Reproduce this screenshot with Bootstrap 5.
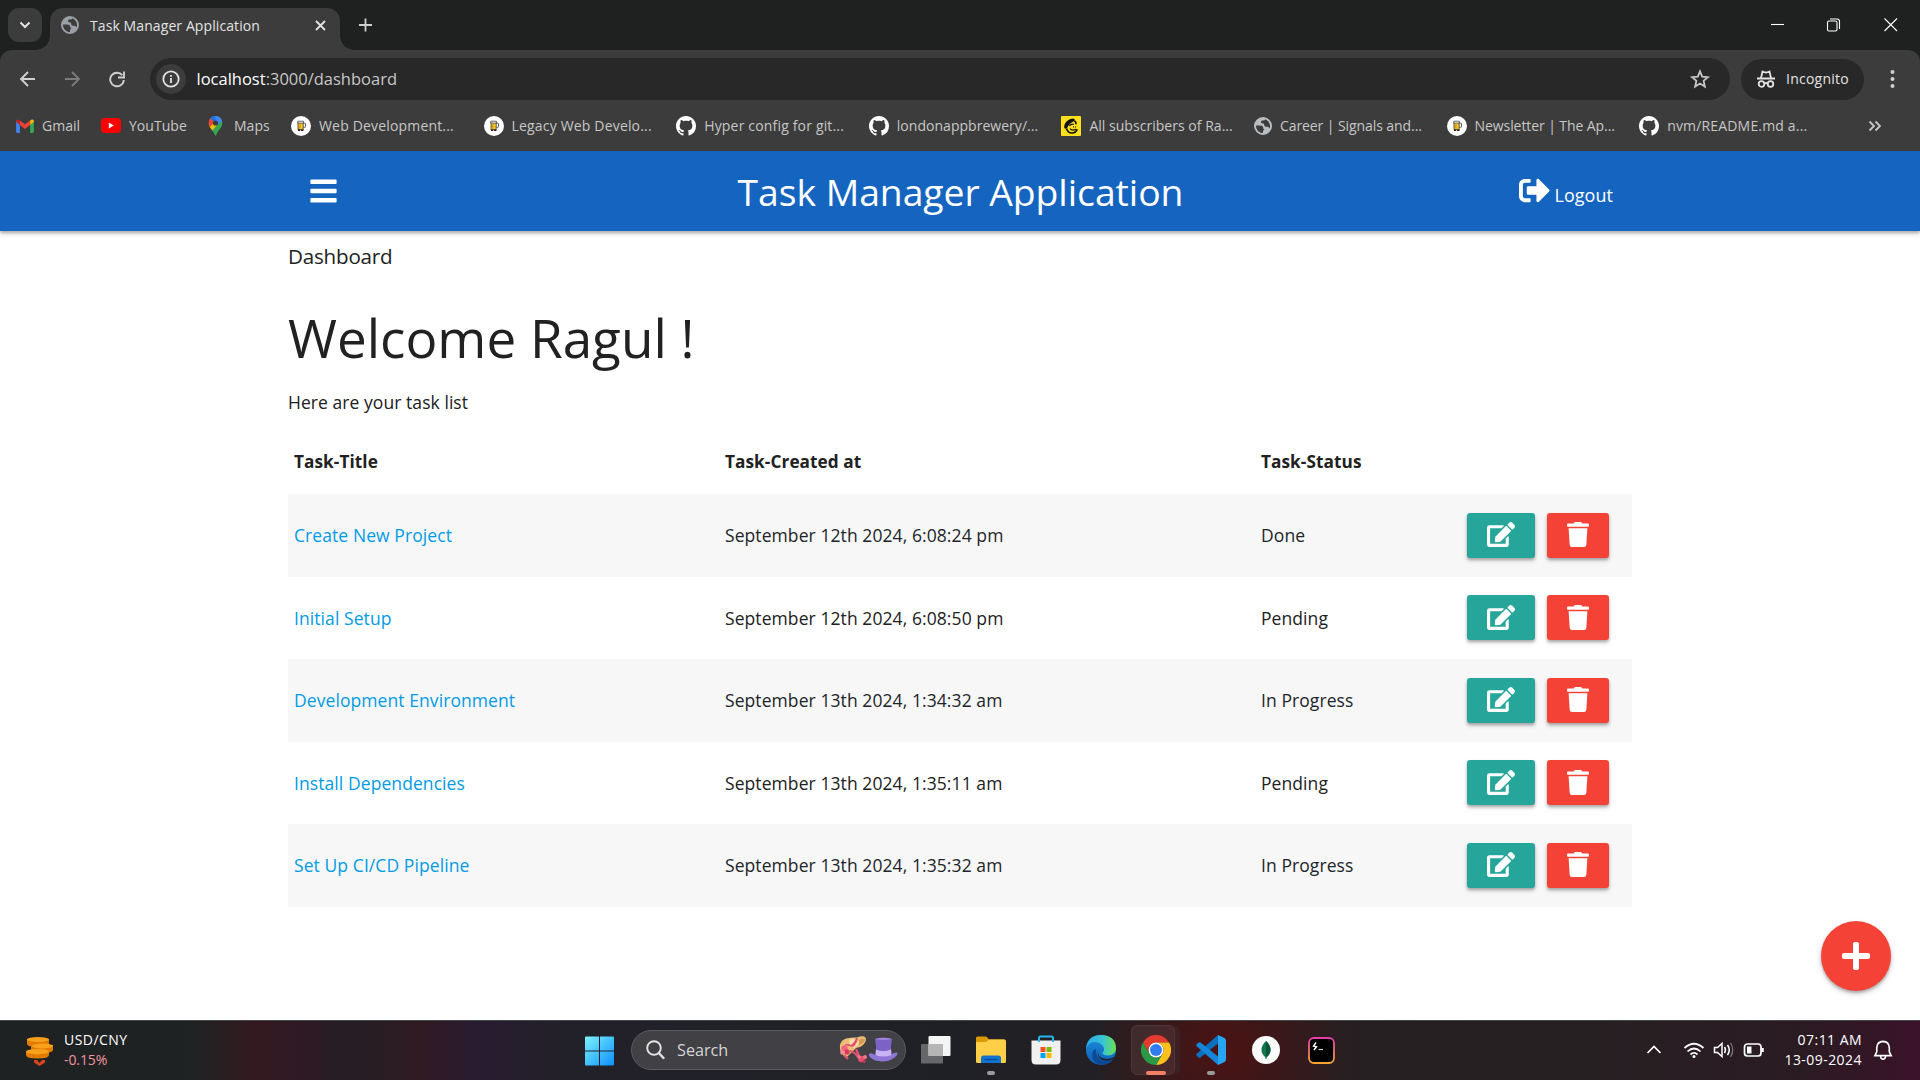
<!DOCTYPE html>
<html lang="en">
<head>
<meta charset="utf-8">
<meta name="viewport" content="width=device-width, initial-scale=1">
<title>Task Manager Application</title>
<link href="https://cdn.jsdelivr.net/npm/bootstrap@5.3.0/dist/css/bootstrap.min.css" rel="stylesheet">
<style>
body{font-family:"Open Sans","Noto Sans",sans-serif;font-size:17.5px;color:#212121;width:1920px;height:1080px;overflow:hidden;background:#fff}
svg{display:block;flex:none}
.tabstrip{height:50px;background:#1f2120;padding-left:8px}
.tab-search{width:34px;height:34px;border-radius:11px;background:#3c3c3c;margin-right:8px}
.page-tab{width:290px;height:42px;margin-top:8px;background:#3c3c3c;border-radius:13px 13px 0 0;padding:0 14px 8px 11px;position:relative;font-size:14px;letter-spacing:.09px;color:#e3e3e3}
.page-tab::before,.page-tab::after{content:"";position:absolute;bottom:0;width:14px;height:14px}
.page-tab::before{left:-14px;background:radial-gradient(circle at 0 0,transparent 13.5px,#3c3c3c 14px)}
.page-tab::after{right:-14px;background:radial-gradient(circle at 100% 0,transparent 13.5px,#3c3c3c 14px)}
.page-tab span{margin-left:11px}
.win-controls{padding-right:22px}
.toolbar-wrap{background:#1f2120}
.toolbar{height:56px;background:#3c3c3c;border-radius:12px 12px 0 0;padding:2px 19px 0 19px}
.omnibox{width:1580px;height:42px;border-radius:21px;background:#282828;margin-left:24px;padding:0 20px 0 6px;font-size:16.5px}
.url-path{color:#c7c7c7}
.site-info{width:30px;height:30px;border-radius:50%;background:#3c3c3c;margin-right:10.5px}
.incog{width:123px;height:41px;border-radius:21px;background:#282828;margin-left:11px;padding-left:15px;color:#e3e3e3;font-size:14px;letter-spacing:.25px}
.incog span{margin-left:10px;padding-bottom:1px}
.bookmarks{height:45px;background:#3c3c3c;padding:0 38px 6px 16px;font-size:14px;letter-spacing:.03px;color:#c7c7c7}
.bm{width:192.6px;white-space:nowrap}
.bm svg{margin-right:8px}
.bm.wider{letter-spacing:.17px}
.bm.narrower{letter-spacing:-.08px}
.bm-gmail{width:85px}.bm-yt{width:107px}.bm-maps{width:83px}
.bm-maps svg{margin-right:9px}
.appbar{height:80px;background:#1565c0;color:#fff;box-shadow:0 2px 3px rgba(0,0,0,.28),0 4px 6px rgba(0,0,0,.08);position:relative}
.inner{width:1344px;margin:0 auto}
.appbar .inner{display:grid;grid-template-columns:1fr auto 1fr;height:80px;align-items:center;padding:0 19px 0 20px}
.menu-btn{padding-left:2px}
.brand-title{font-size:37.3px;letter-spacing:-.05px;line-height:50px;padding-top:2px}
.logout-link{font-size:17.9px;letter-spacing:.1px}
.crumb{font-size:20.6px;letter-spacing:-.2px;line-height:51px;padding-bottom:1px}
.hello{font-size:53px;line-height:109px}
.sub{line-height:20px;margin-bottom:17px;letter-spacing:.06px}
.tasks{table-layout:fixed;width:1344px;margin:0;--bs-table-striped-bg:#f7f7f8;--bs-table-bg:#fff;color:#212121;letter-spacing:.08px}
.tasks>:not(caption)>*>*{border:0;padding:0 6px;color:#212121;vertical-align:middle}
.tasks thead tr{height:65px;font-size:17.2px}.tasks tbody tr{height:82.5px}
.tasks a{color:#039be5;text-decoration:none}
.col-title{width:431px}.col-created{width:536px}.col-status{width:206px}
.acts{gap:12px}
.act{height:45px;border:0;border-radius:3px;padding:0 0 1px;box-shadow:0 2px 3px rgba(0,0,0,.26),0 3px 5px rgba(0,0,0,.12);display:flex;align-items:center;justify-content:center}
.act-edit{width:68px;background:#26a69a}.act-del{width:62px;background:#f44336}
.fab{position:absolute;left:1821px;top:921px;width:70px;height:70px;background:#f44336;box-shadow:0 2px 3px rgba(0,0,0,.26),0 3px 6px rgba(0,0,0,.14)}
.taskbar{height:60px;border-top:1px solid #454848;font-size:14px;letter-spacing:.45px;line-height:20px;color:#fff;background:
 radial-gradient(ellipse 130px 120px at 1222px 30px,rgba(84,16,16,.85),transparent),
 linear-gradient(90deg,#1f2223 0,#1f2223 190px,#33191f 260px,#2d1a25 310px,#231f24 350px,#301a22 420px,#281c30 475px,#222129 560px,#1f2026 950px,#222024 1080px,#251f22 1340px,#272023 1600px,#2a1b22 1800px,#351527 1890px,#3c132b 1920px)}
.ticker{width:585px;padding-left:25px;gap:9px}
.two-line{padding-bottom:2px}
.loss{color:#f1939d;letter-spacing:-.1px}
.searchbox{width:275px;height:40px;border:1px solid #5b5a5e;border-radius:20px;background:#414044;color:#d5d5d5;font-size:16.2px;letter-spacing:0;padding:0 7px 0 14px;margin:0 15px 1px 16px}
.dock{gap:25px}
.dock>div{width:30px;height:59px;display:flex;align-items:center;justify-content:center;position:relative}
.dock>div>svg{margin-bottom:1px}
.run::after{content:"";position:absolute;bottom:5px;left:11px;width:8px;height:4px;border-radius:2px;background:#9b9b9d}
.run.current::after{left:5px;width:20px;background:#f28066}
.current::before{content:"";position:absolute;left:-10px;top:4px;width:44px;height:50px;border-radius:6px;border:1px solid #513438;background:rgba(255,255,255,.07);box-shadow:6px 0 0 -1px #3d2023}
.dock svg{position:relative}
.tray{padding-right:25px}
.tray>svg{margin-bottom:2px}
</style>
</head>
<body class="d-flex flex-column">
<svg width="0" height="0" class="position-absolute">
<defs>
<symbol id="globe" viewBox="2 2 20 20"><path fill-rule="evenodd" d="M12 2a10 10 0 1 0 0 20 10 10 0 0 0 0-20zM4.200 11.500h4.300c2.800 0 3.800 1 3.800 2.700 0 1.300.8 1.500 1.500 1.500-1 .7-1.800 1.300-1.800 2.300v1.900c-4.300 0-7.800-3.400-7.800-8.400zM14.200 4.500c3.200.9 5.600 3.900 5.600 7.500 0 1-.2 1.900-.5 2.700-.7-1.400-1.600-1.900-3-1.900-2 0-3-.8-3-2.300 0-1-.5-1.400-1.500-1.400-1.200 0-2-.6-2-1.600 0-1.200 1-1.500 2.200-1.500 1.300 0 2.200-.4 2.200-1.500z"/></symbol>
<symbol id="gh" viewBox="0 0 16 16"><path fill="#fff" d="M8 0C3.580 0 0 3.580 0 8c0 3.540 2.290 6.530 5.470 7.590.4.070.55-.17.55-.38 0-.19-.01-.82-.01-1.490-2.010.37-2.530-.49-2.690-.94-.09-.23-.48-.94-.82-1.130-.28-.15-.68-.52-.01-.53.63-.01 1.080.58 1.230.82.72 1.210 1.870.87 2.330.66.07-.52.28-.87.51-1.070-1.780-.2-3.640-.89-3.640-3.950 0-.87.31-1.590.82-2.150-.08-.2-.36-1.020.08-2.120 0 0 .67-.21 2.200.82.64-.18 1.320-.27 2-.27s1.360.09 2 .27c1.530-1.040 2.200-.82 2.200-.82.44 1.100.16 1.920.08 2.120.51.56.82 1.270.82 2.150 0 3.070-1.870 3.750-3.650 3.950.29.25.54.73.54 1.480 0 1.070-.01 1.930-.01 2.200 0 .21.15.46.55.38A8.010 8.010 0 0 0 16 8c0-4.420-3.580-8-8-8z"/></symbol>
<symbol id="beer" viewBox="0 0 20 20"><circle cx="10" cy="10" r="10" fill="#fff"/><path d="M12.500 7.200h1.300q.7 0 .7.700v2.700q0 .7-.7.700h-1.300" fill="none" stroke="#444" stroke-width=".9"/><path d="M7 6h5.200v7.600H7z" fill="#f6c52c" stroke="#3a3320" stroke-width=".8"/><path d="M6.800 5.200h5.600v1.900H6.800z" fill="#fff" stroke="#333" stroke-width=".7"/><path d="M8.900 8.300v4.200" stroke="#b9820c" stroke-width=".8"/><path d="M6.900 13.600h2.300v1.500H6.900zM10.100 13.600h2.300v1.500h-2.300z" fill="#222"/></symbol>
<symbol id="edit" viewBox="0 0 576 512"><path fill="#fff" d="M402.600 83.200l90.200 90.200c3.800 3.800 3.800 10 0 13.800L274.400 405.600l-92.800 10.300c-12.400 1.400-22.900-9.100-21.500-21.500l10.300-92.800L388.800 83.200c3.800-3.800 10-3.800 13.800 0zm162-22.900l-48.800-48.800c-15.200-15.200-39.900-15.200-55.200 0l-35.400 35.400c-3.800 3.800-3.800 10 0 13.800l90.200 90.200c3.800 3.800 10 3.800 13.800 0l35.400-35.400c15.200-15.300 15.200-40 0-55.200zM384 346.200V448H64V128h229.800c3.200 0 6.200-1.300 8.500-3.500l40-40c7.600-7.600 2.200-20.500-8.500-20.500H48C21.500 64 0 85.500 0 112v352c0 26.500 21.500 48 48 48h352c26.500 0 48-21.500 48-48V306.200c0-10.700-12.900-16-20.500-8.500l-40 40c-2.200 2.300-3.500 5.300-3.500 8.500z"/></symbol>
<symbol id="trash" viewBox="0 0 448 512"><path fill="#fff" d="M432 32H312l-9.400-18.700A24 24 0 0 0 281.100 0H166.800a23.720 23.720 0 0 0-21.400 13.300L136 32H16A16 16 0 0 0 0 48v32a16 16 0 0 0 16 16h416a16 16 0 0 0 16-16V48a16 16 0 0 0-16-16zM53.200 467a48 48 0 0 0 47.900 45h245.800a48 48 0 0 0 47.900-45L416 128H32z"/></symbol>
</defs>
</svg>

<header>
  <div class="tabstrip d-flex align-items-center">
    <div class="tab-search d-flex align-items-center justify-content-center"><svg width="12" height="8" viewBox="0 0 12 8" fill="none" stroke="#e3e3e3" stroke-width="2"><path d="M1.500 1.500L6 6l4.500-4.500"/></svg></div>
    <div class="page-tab d-flex align-items-center">
      <svg width="18" height="18" fill="#9aa0a6"><use href="#globe"/></svg>
      <span>Task Manager Application</span>
      <svg class="ms-auto" width="11" height="11" viewBox="0 0 11 11" stroke="#e3e3e3" stroke-width="1.800"><path d="M1 1l9 9M10 1l-9 9"/></svg>
    </div>
    <svg class="ms-3" width="17" height="14" viewBox="0 0 17 14" stroke="#d0d0d0" stroke-width="1.800"><path d="M9.500 .500v13M3 7h13"/></svg>
    <div class="win-controls ms-auto">
      <svg width="127" height="14" viewBox="0 0 127 14" fill="none" stroke="#fff" stroke-width="1.100"><path d="M0 6.500h13"/><rect x="56.500" y="3" width="9.500" height="10" rx="1.500"/><path d="M59 1h7q2.500 0 2.500 2.500V11"/><path d="M113.500 .500l12.500 12.500M126 .500L113.500 13"/></svg>
    </div>
  </div>
  <div class="toolbar-wrap"><div class="toolbar d-flex align-items-center">
    <svg width="107" height="18" viewBox="0 0 107 18" fill="none" stroke-width="1.900"><path stroke="#d0d0d0" d="M16 9H2.500M9 2L2 9l7 7"/><path stroke="#7b7b7b" d="M46 9h13.500M53 2l7 7-7 7"/><path stroke="#d0d0d0" d="M103.300 5.200A6.800 6.800 0 1 0 104.800 10M105 1.500v6h-6"/></svg>
    <div class="omnibox d-flex align-items-center">
      <span class="site-info d-flex align-items-center justify-content-center"><svg width="18" height="18" viewBox="0 0 18 18" fill="none" stroke="#e3e3e3" stroke-width="1.800"><circle cx="9" cy="9" r="7.700"/><path d="M9 8v5M9 5v1.700"/></svg></span>
      <span><span class="text-white">localhost</span><span class="url-path">:3000/dashboard</span></span>
      <svg class="ms-auto" width="20" height="20" viewBox="0 0 20 20" fill="none" stroke="#c7c7c7" stroke-width="1.800"><path d="M10 2.300l2.200 5.300 5.700.5-4.300 3.800 1.300 5.600-4.900-3-4.900 3 1.300-5.600L2.100 8.100l5.700-.5z"/></svg>
    </div>
    <div class="incog d-flex align-items-center"><svg width="20" height="20" viewBox="0 0 20 20" fill="none" stroke="#e3e3e3" stroke-width="1.800"><path d="M1 9.500h18M5 9l1.500-6.500q2 1 3.500 1t3.500-1L15 9"/><circle cx="5.500" cy="15" r="2.800"/><circle cx="14.500" cy="15" r="2.800"/><path d="M8.300 14.500q1.700-1 3.400 0"/></svg><span>Incognito</span></div>
    <svg class="ms-auto" width="18" height="20" viewBox="0 0 18 20" fill="#d0d0d0"><circle cx="9.500" cy="3" r="2"/><circle cx="9.500" cy="10" r="2"/><circle cx="9.500" cy="17" r="2"/></svg>
  </div></div>
  <div class="bookmarks d-flex align-items-center">
    <div class="bm bm-gmail d-flex align-items-center"><svg width="18" height="14" viewBox="0 0 19 15"><path fill="#4285f4" d="M0 2v11.500Q0 15 1.500 15H4V6z"/><path fill="#34a853" d="M19 2v11.500q0 1.500-1.500 1.500H15V6z"/><path fill="#fbbc04" d="M15 1.500Q17 0 18.300 .8 19 1.300 19 3l-4 3.500z"/><path fill="#c5221f" d="M4 1.500Q2 0 .7.800 0 1.300 0 3l4 3.500z"/><path fill="#ea4335" d="M4 1.500l5.500 4.200L15 1.500v5L9.500 10.700 4 6.500z"/></svg><span>Gmail</span></div>
    <div class="bm bm-yt d-flex align-items-center"><svg width="20" height="15" viewBox="0 0 20 15"><rect width="20" height="15" rx="4" fill="#f00"/><path d="M7.800 4.500l5 3-5 3z" fill="#fff"/></svg><span>YouTube</span></div>
    <div class="bm bm-maps d-flex align-items-center"><svg width="17" height="20" viewBox="-.5 0 17 20"><clipPath id="pin"><path d="M7 0a7 7 0 0 1 7 7c0 3-2 4.800-3.500 7C9 16.200 8.200 18 7 20 5.800 18 5 16.200 3.500 14 2 11.800 0 10 0 7a7 7 0 0 1 7-7z"/></clipPath><g clip-path="url(#pin)"><path fill="#34a853" d="M0 0h16v20H0z"/><path fill="#fbbc04" d="M-1 8L4 4l8 1-8.500 10z"/><path fill="#4285f4" d="M3 0h9l3 4-6 5z"/><path fill="#1a73e8" d="M0 0h6l2 5-4 1z"/><path fill="#ea4335" d="M-1 2l2.500 0L6 6l-4.500 5L-1 8z"/></g><circle cx="7" cy="7" r="2.600" fill="#3a3c3c"/></svg><span>Maps</span></div>
    <div class="bm wider d-flex align-items-center"><svg width="20" height="20"><use href="#beer"/></svg><span>Web Development...</span></div>
    <div class="bm wider d-flex align-items-center"><svg width="20" height="20"><use href="#beer"/></svg><span>Legacy Web Develo...</span></div>
    <div class="bm wider d-flex align-items-center"><svg width="20" height="20"><use href="#gh"/></svg><span>Hyper config for git...</span></div>
    <div class="bm d-flex align-items-center"><svg width="20" height="20"><use href="#gh"/></svg><span>londonappbrewery/...</span></div>
    <div class="bm d-flex align-items-center"><svg width="20" height="20" viewBox="0 0 20 20"><rect width="20" height="20" rx="1" fill="#ffe01b"/><path d="M3.200 11.500Q3 7 7 4.300T13.500 3q.8.800-.5 2Q9 7 7.300 9.700 6.500 12 5 12.800 3.500 13 3.200 11.500z" fill="#111"/><path d="M5.500 12.500Q7 17.200 11 17q4-.2 5.200-3.800M13 5q2.500.5 1.700 3.200" fill="none" stroke="#111" stroke-width="1.700"/><path d="M9 12.500q1.500 2.800 6 .800M8.300 10q2-2.500 4.500-1.500M12 10.800h.900M14.200 10.800h.9" fill="none" stroke="#111" stroke-width="1.200"/></svg><span>All subscribers of Ra...</span></div>
    <div class="bm narrower d-flex align-items-center"><svg width="18" height="18" fill="#b9bec3"><use href="#globe"/></svg><span>Career | Signals and...</span></div>
    <div class="bm narrower d-flex align-items-center"><svg width="20" height="20"><use href="#beer"/></svg><span>Newsletter | The Ap...</span></div>
    <div class="bm wider d-flex align-items-center"><svg width="20" height="20"><use href="#gh"/></svg><span>nvm/README.md a...</span></div>
    <svg class="ms-auto" width="14" height="12" viewBox="0 0 14 12" fill="none" stroke="#c7c7c7" stroke-width="1.800"><path d="M1.500 1.500L6 6l-4.500 4.500M7.500 1.500L12 6l-4.500 4.500"/></svg>
  </div>
</header>

<nav class="appbar"><div class="inner">
  <a class="menu-btn" href="#"><svg width="27" height="30" viewBox="0 0 448 512" fill="#fff"><rect y="60" width="448" height="76" rx="16"/><rect y="218" width="448" height="76" rx="16"/><rect y="376" width="448" height="76" rx="16"/></svg></a>
  <span class="brand-title">Task Manager Application</span>
  <a class="logout-link d-flex align-items-center justify-content-end text-white text-decoration-none" href="#"><svg class="me-1" width="31" height="31" viewBox="0 0 512 512" fill="#fff"><path d="M497 273L329 441c-15 15-41 4.500-41-17v-96H152c-13.300 0-24-10.700-24-24v-96c0-13.300 10.700-24 24-24h136V88c0-21.400 25.900-32 41-17l168 168c9.300 9.400 9.300 24.600 0 34zM192 436v-40c0-6.600-5.400-12-12-12H96c-17.700 0-32-14.300-32-32V160c0-17.700 14.300-32 32-32h84c6.600 0 12-5.400 12-12V76c0-6.600-5.400-12-12-12H96c-53 0-96 43-96 96v192c0 53 43 96 96 96h84c6.600 0 12-5.400 12-12z"/></svg><span class="pt-2">Logout</span></a>
</div></nav>

<main class="flex-grow-1"><div class="inner">
  <div class="crumb">Dashboard</div>
  <div class="hello">Welcome Ragul !</div>
  <div class="sub">Here are your task list</div>
  <table class="table table-striped tasks">
    <colgroup><col class="col-title"><col class="col-created"><col class="col-status"><col></colgroup>
    <thead><tr><th>Task-Title</th><th>Task-Created at</th><th>Task-Status</th><th></th></tr></thead>
    <tbody>
    <tr><td><a href="#">Create New Project</a></td><td>September 12th 2024, 6:08:24 pm</td><td>Done</td><td><div class="d-flex acts"><button class="btn act act-edit"><svg width="28" height="25"><use href="#edit"/></svg></button><button class="btn act act-del"><svg width="22" height="25"><use href="#trash"/></svg></button></div></td></tr>
    <tr><td><a href="#">Initial Setup</a></td><td>September 12th 2024, 6:08:50 pm</td><td>Pending</td><td><div class="d-flex acts"><button class="btn act act-edit"><svg width="28" height="25"><use href="#edit"/></svg></button><button class="btn act act-del"><svg width="22" height="25"><use href="#trash"/></svg></button></div></td></tr>
    <tr><td><a href="#">Development Environment</a></td><td>September 13th 2024, 1:34:32 am</td><td>In Progress</td><td><div class="d-flex acts"><button class="btn act act-edit"><svg width="28" height="25"><use href="#edit"/></svg></button><button class="btn act act-del"><svg width="22" height="25"><use href="#trash"/></svg></button></div></td></tr>
    <tr><td><a href="#">Install Dependencies</a></td><td>September 13th 2024, 1:35:11 am</td><td>Pending</td><td><div class="d-flex acts"><button class="btn act act-edit"><svg width="28" height="25"><use href="#edit"/></svg></button><button class="btn act act-del"><svg width="22" height="25"><use href="#trash"/></svg></button></div></td></tr>
    <tr><td><a href="#">Set Up CI/CD Pipeline</a></td><td>September 13th 2024, 1:35:32 am</td><td>In Progress</td><td><div class="d-flex acts"><button class="btn act act-edit"><svg width="28" height="25"><use href="#edit"/></svg></button><button class="btn act act-del"><svg width="22" height="25"><use href="#trash"/></svg></button></div></td></tr>
    </tbody>
  </table>
</div></main>
<a class="fab rounded-circle d-flex align-items-center justify-content-center" href="#"><svg width="28" height="32" viewBox="0 0 448 512" fill="#fff"><path d="M416 208H272V64c0-17.670-14.330-32-32-32h-32c-17.670 0-32 14.330-32 32v144H32c-17.670 0-32 14.330-32 32v32c0 17.670 14.330 32 32 32h144v144c0 17.670 14.330 32 32 32h32c17.670 0 32-14.330 32-32V304h144c17.670 0 32-14.330 32-32v-32c0-17.670-14.330-32-32-32z"/></svg></a>

<footer class="taskbar d-flex align-items-center">
  <div class="ticker d-flex align-items-center">
    <svg width="30" height="30" viewBox="0 0 30 30"><g fill="#e07b00"><path d="M2 3v5q0 3 11 3t11-3V3z"/><path d="M6 9v5q0 3 11 3t11-3V9z"/><path d="M1 15v4q0 3.500 11.500 3.500T24 19v-4z"/></g><g fill="#f9a01b"><ellipse cx="13" cy="3.500" rx="11" ry="2.600"/><ellipse cx="17.500" cy="10" rx="10.500" ry="2.500"/><ellipse cx="12.500" cy="15.700" rx="11.500" ry="2.700"/></g><path d="M9 24h3l2.500 3 2.500-3h3v2.500L14.500 30 9 26.500z" fill="#d8451d"/></svg>
    <div class="two-line"><div>USD/CNY</div><div class="loss">-0.15%</div></div>
  </div>
  <svg width="30" height="30" viewBox="0 0 30 30"><defs><linearGradient id="win" x1="0" y1="0" x2="30" y2="30" gradientUnits="userSpaceOnUse"><stop stop-color="#7df3ff"/><stop offset="1" stop-color="#0a8dff"/></linearGradient></defs><path fill="url(#win)" d="M0 1.500Q0 .500 1 .500h13v14H0zM15 .500h13q1 0 1 1v13H15zM0 15.500h14v14H1q-1 0-1-1zM15 15.500h14v13q0 1-1 1H15z"/></svg>
  <div class="searchbox d-flex align-items-center">
    <svg width="19" height="20" viewBox="0 0 19 20" fill="none" stroke="#e4e4e4"><circle cx="8" cy="8" r="6.800" stroke-width="1.900"/><path d="M12.800 13l4.700 5" stroke-width="2.400" stroke-linecap="round"/></svg>
    <span class="ms-2 ps-1">Search</span>
    <svg class="ms-auto" width="59" height="30" viewBox="0 0 59 30">
      <path d="M1 13Q0 6 7 3.500 13 2 18 2.500 24 0 26.500 2.500 28 6 24 10q-3 3-7 3-4 4-9 9Q4 22 4 19 1 17 1 13z" fill="#eebd79"/><path d="M10 5q5-3 10 1 0 5-5 7-5-2-5-8z" fill="#f8dcaa"/><path d="M20 5q3-2 6-1-1 5-6 6z" fill="#d99a50"/>
      <path d="M5 10q4-2 7 0 4-3 5-7l2 .3q-1 6-5 8.700" fill="#e2526f"/>
      <path d="M11 16q5 1 8 6M17 14l4 9M5 20l4 4" stroke="#df5470" stroke-width="2.200" fill="none"/>
      <circle cx="5.500" cy="13.500" r="3.200" fill="#f2647d"/><circle cx="8" cy="17" r="2.700" fill="#d93a5b"/><circle cx="3.500" cy="17.500" r="2.300" fill="#f58c9c"/>
      <circle cx="22.500" cy="24" r="3.300" fill="#e4506b"/><circle cx="26" cy="22" r="2" fill="#f2778c"/><circle cx="20" cy="22" r="1.800" fill="#f2778c"/><circle cx="25" cy="26.500" r="1.600" fill="#c73454"/>
      <path d="M30 19q1.500-1.500 5 .500h17q4-2.500 6-2 1.500 2-3 5.500-5 3.500-12 3.500-8-.5-11-3.500-2.500-2-2-4z" fill="#8f76d6"/><path d="M36 4q8.500-2.500 17 0-1.500 6-.8 14.500-7.500 4-15.400 0Q37.500 10 36 4z" fill="#7c62c4"/><path d="M36.900 14.500q7.500 3 15.200 0l.4 5.500q-8 3-16 0z" fill="#c9b2f5"/><path d="M36 4q8.500-2.500 17 0-8 2-17 0z" fill="#9d86dc"/></svg>
  </div>
  <div class="dock d-flex">
    <div><svg width="30" height="30" viewBox="0 0 30 30"><rect x="0" y="9" width="22" height="19.500" rx="1" fill="#666768"/><rect x="7.500" y="1" width="22" height="20" rx="1" fill="#f4f4f4"/><path d="M7.500 9H22v12H7.500z" fill="#b5b5b6"/></svg></div>
    <div class="run"><svg width="30" height="30" viewBox="0 0 30 30"><path d="M0 3q0-1.500 1.500-1.500h8q1 0 2 1.300L13 4.500h15q2 0 2 2V20H0z" fill="#d99b06"/><path d="M0 7h10l3-2.500h15q2 0 2 2v20q0 1.500-1.500 1.500h-27Q0 28 0 26.500z" fill="#ffcf48"/><path d="M5 28v-5q0-2.500 2.500-2.500h15q2.500 0 2.500 2.500v5z" fill="#1173cf"/><path d="M8.500 24.500h13" stroke="#0a4c96" stroke-width="1.200"/></svg></div>
    <div><svg width="30" height="30" viewBox="0 0 30 30"><path d="M8 8V3q0-1.500 1.500-1.500h11Q22 1.500 22 3v5" fill="none" stroke="#27b4ef" stroke-width="2"/><path d="M.5 5.500h29V25q0 4.500-4.500 4.500H5Q.5 29.500.5 25z" fill="#f0f0f0"/><path d="M8 4v3M22 4v3" stroke="#27b4ef" stroke-width="2"/><path fill="#f25022" d="M9.500 12h5v5h-5z"/><path fill="#7fba00" d="M15.500 12h5v5h-5z"/><path fill="#00a4ef" d="M9.500 18h5v5h-5z"/><path fill="#ffb900" d="M15.500 18h5v5h-5z"/></svg></div>
    <div><svg width="30" height="30" viewBox="0 0 30 30"><defs><linearGradient id="eg1"><stop stop-color="#2aa8e8"/><stop offset=".55" stop-color="#36c5d6"/><stop offset="1" stop-color="#6be04f"/></linearGradient><linearGradient id="eg2" x1="0" y1="0" x2="0" y2="1"><stop stop-color="#1b8fdc"/><stop offset="1" stop-color="#0f5fb8"/></linearGradient></defs><circle cx="15" cy="15" r="15" fill="url(#eg2)"/><path d="M0 14Q1 0 15 0q14.500.5 15 13 0 7-7.500 7.500Q16 20.500 16.500 17.500q2-1.500 1.500-4Q16 7 8.500 7 2 8 0 14z" fill="url(#eg1)"/><path d="M10 14q-1 6 4 10 6 4 14-1-4 7-12.500 7Q6 28 6 20q0-5 4-6z" fill="#0c4a97"/><path d="M13 13q-3 6 2 9.500 6 3 13-.5 1.500-.5.500 1-6 4-12 2-7.500-4-3.500-12z" fill="#1f2228"/></svg></div>
    <div class="run current"><svg width="30" height="30" viewBox="0 0 30 30"><path fill="#e33b2e" d="M2 7.500A15 15 0 0 1 28 7.500H15a7.500 7.500 0 0 0-6.500 11.300z"/><path fill="#fcc21b" d="M28 7.500A15 15 0 0 1 15 30l6.500-11.200A7.500 7.500 0 0 0 15 7.500z"/><path fill="#2b9a47" d="M2 7.500A15 15 0 0 0 15 30l6.500-11.200a7.500 7.500 0 0 1-13 0z"/><circle cx="15" cy="15" r="7.500" fill="#fff"/><circle cx="15" cy="15" r="6" fill="#2f7df0"/></svg></div>
    <div class="run"><svg width="30" height="30" viewBox="0 0 30 30"><path d="M22 0v8.500L4.500 22.500q-1 .7-2 0l-1.800-1.700q-1-1 0-2z" fill="#0a6fbe"/><path d="M22 30v-8.500L4.500 7.500q-1-.7-2 0L.7 9.200q-1 1 0 2z" fill="#1485d8"/><path d="M22 0l6.500 3Q30 4 30 5.500v19q0 1.500-1.500 2.500L22 30z" fill="#27a4f2"/></svg></div>
    <div><svg width="28" height="28" viewBox="0 0 28 28"><circle cx="14" cy="14" r="14" fill="#fafafa"/><path d="M14 5q4.500 4 4.500 9 0 4-3.800 7.300L14.500 23h-1l-.2-1.700Q9.500 18 9.500 14q0-5 4.500-9z" fill="#11764f"/><path d="M14 5q4.500 4 4.500 9 0 4-3.800 7.300L14 20z" fill="#0a5639"/></svg></div>
    <div><svg width="27" height="27" viewBox="0 0 27 27"><defs><linearGradient id="hy" x1="0" y1="0" x2="0" y2="1"><stop stop-color="#e93cac"/><stop offset="1" stop-color="#f7a531"/></linearGradient></defs><rect x="1" y="1" width="25" height="25" rx="5" fill="#000" stroke="url(#hy)" stroke-width="1.800"/><path d="M8 5.500L5.500 9l3 .800L6 13" fill="none" stroke="#fff" stroke-width="1.400"/><path d="M10.500 12.500h4.500" stroke="#ccc" stroke-width="1.200"/></svg></div>
  </div>
  <div class="tray ms-auto d-flex align-items-center">
    <svg width="118" height="22" viewBox="0 0 118 22" fill="none" stroke="#fff" stroke-width="1.700"><path d="M1.500 14L8 7.500l6.500 6.500"/><path d="M38.500 9q9.500-8.500 19 0M41.500 12.500q6.500-6 13 0M44.500 15.500q3.500-3.200 7 0"/><circle cx="48" cy="17.500" r="1.500" fill="#fff" stroke="none"/><path d="M68.500 8.500h3l4.500-4v13l-4.500-4h-3z" stroke-width="1.500"/><path d="M78.500 8q2 3 0 6M81.500 6q3.500 5 0 10" stroke-width="1.500"/><path d="M84.500 4q4.500 7 0 14" stroke="#777" stroke-width="1.300"/><rect x="98.500" y="5" width="16.500" height="12" rx="3"/><path d="M101 7.500h4.500v7H101z" fill="#fff" stroke="none"/><path d="M116.500 9v4" stroke-width="2.500"/></svg>
    <div class="two-line text-end ms-3 ps-1"><div>07:11 AM</div><div>13-09-2024</div></div>
    <svg class="ms-2" width="25" height="20" viewBox="-2.500 0 21 18.500" fill="none" stroke="#fff" stroke-width="1.500"><path d="M1 14.500l1.700-3.500V7Q3.200 1.500 8.500 1.300 13.800 1.500 14.300 7v4l1.700 3.500zM6 15q.5 2.800 2.500 2.800T11 15"/></svg>
  </div>
</footer>
<script src="https://cdn.jsdelivr.net/npm/bootstrap@5.3.0/dist/js/bootstrap.bundle.min.js"></script>
</body>
</html>
